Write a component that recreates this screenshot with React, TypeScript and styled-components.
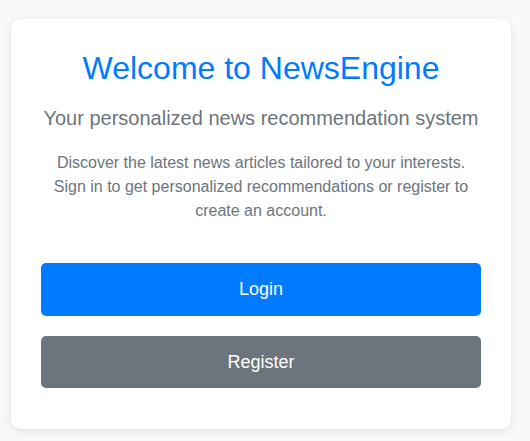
import { createGlobalStyle, styled } from "styled-components";

const GlobalStyle = createGlobalStyle`
    body {
        margin: 0;
        background-color: #f8f9fa;
        font-family: "Liberation Sans", Arial, sans-serif;
    }
`;

const Page = styled.div`
    padding: 19px 11px;
`;

const Card = styled.div`
    width: 500px;
    box-sizing: border-box;
    padding: 30px 30px 41px;
    background-color: #ffffff;
    border-radius: 10px;
    box-shadow: 0 2px 10px rgba(0, 0, 0, 0.1);
    text-align: center;
`;

const Title = styled.h1`
    margin: 0 0 19px;
    font-size: 32px;
    font-weight: 400;
    line-height: 1.2;
    color: #007bff;
`;

const Subtitle = styled.h2`
    margin: 0 0 21px;
    font-size: 20px;
    font-weight: 400;
    line-height: 1.2;
    color: #6c757d;
`;

const Description = styled.p`
    margin: 0 0 40px;
    font-size: 16px;
    line-height: 1.5;
    color: #6c757d;
`;

const Actions = styled.div`
    display: flex;
    flex-direction: column;
    gap: 20px;
`;

const Button = styled.button<{ $variant: "primary" | "secondary" }>`
    width: 100%;
    padding: 15px;
    border: none;
    border-radius: 5px;
    font-family: inherit;
    font-size: 18px;
    line-height: 1.25;
    color: #ffffff;
    cursor: pointer;
    background-color: ${(props) =>
        props.$variant === "primary" ? "#007bff" : "#6c757d"};
`;

function App() {
    return (
        <>
            <GlobalStyle />
            <Page>
                <Card>
                    <Title>Welcome to NewsEngine</Title>
                    <Subtitle>Your personalized news recommendation system</Subtitle>
                    <Description>
                        Discover the latest news articles tailored to your
                        interests. Sign in to get personalized recommendations
                        or register to create an account.
                    </Description>
                    <Actions>
                        <Button $variant="primary">Login</Button>
                        <Button $variant="secondary">Register</Button>
                    </Actions>
                </Card>
            </Page>
        </>
    );
}

export default App;
